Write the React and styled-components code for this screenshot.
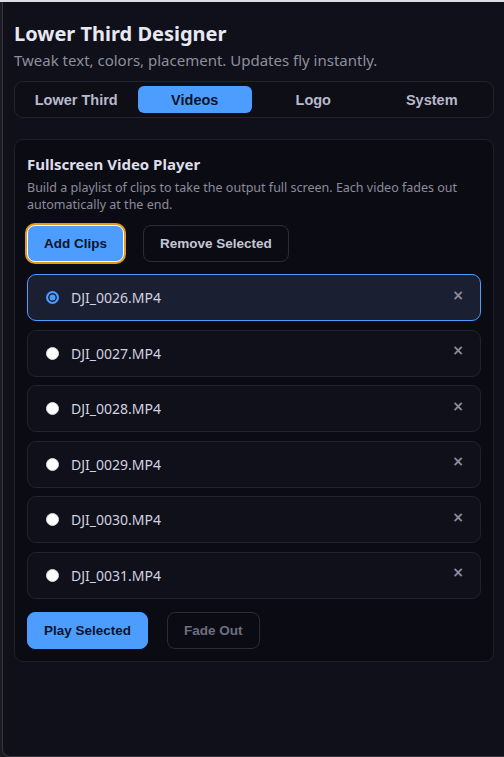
import React, { useState } from 'react';
import styled, { createGlobalStyle } from 'styled-components';

const GlobalStyle = createGlobalStyle`
  html, body {
    margin: 0;
    padding: 0;
    background: #1b1c22;
  }
  body {
    font-family: "Noto Sans", "Open Sans", sans-serif;
  }
`;

const Frame = styled.div`
  width: 504px;
  height: 757px;
  box-sizing: border-box;
  border-top: 2px solid #dcdce2;
  padding-left: 2px;
  background: #1b1c22;
`;

const Panel = styled.div`
  height: 100%;
  box-sizing: border-box;
  background: #0f1019;
  border-left: 1px solid #34353d;
  border-bottom: 1px solid #34353d;
  border-bottom-left-radius: 8px;
  padding: 18px 10px 0 11px;
`;

const Title = styled.h1`
  margin: 0;
  font-size: 20px;
  font-weight: 700;
  color: #e8e8f2;
  line-height: 28px;
`;

const Subtitle = styled.p`
  margin: 2px 0 11px;
  font-size: 15px;
  color: #8e8e9e;
  line-height: 20px;
`;

const Tabs = styled.div`
  display: grid;
  grid-template-columns: repeat(4, 1fr);
  gap: 4px;
  padding: 4px;
  border: 1px solid #22232e;
  border-radius: 9px;
  background: #0d0e16;
`;

const Tab = styled.button`
  height: 27px;
  border: none;
  border-radius: 6px;
  font-family: "Liberation Sans", Arial, sans-serif;
  font-weight: 700;
  font-size: 14.5px;
  background: ${p => (p.$active ? '#4c9dff' : 'transparent')};
  color: ${p => (p.$active ? '#0c1426' : '#b9b9cc')};
  cursor: pointer;
`;

const Card = styled.section`
  margin-top: 21px;
  border: 1px solid #1f202b;
  border-radius: 9px;
  background: #0b0c13;
  padding: 12px 12px 12px;
`;

const CardTitle = styled.h2`
  margin: 0;
  font-size: 15px;
  font-weight: 700;
  color: #dedeea;
  line-height: 24px;
`;

const CardText = styled.p`
  margin: 3px 0 12px;
  font-size: 12.5px;
  line-height: 17px;
  color: #8b8b9c;
`;

const Row = styled.div`
  display: flex;
  gap: 19px;
  align-items: center;
`;

const Button = styled.button`
  height: 37px;
  box-sizing: border-box;
  padding: 0 16px;
  border-radius: 8px;
  font-family: "Liberation Sans", Arial, sans-serif;
  font-weight: 700;
  font-size: 13.5px;
  cursor: pointer;
  border: 1px solid ${p => (p.$primary ? '#4c9dff' : '#2b2c39')};
  background: ${p => (p.$primary ? '#4c9dff' : 'transparent')};
  color: ${p => (p.$primary ? '#0c1426' : p.$dim ? '#6e6e80' : '#c6c6d6')};
  ${p =>
    p.$focus &&
    `
    border: 1px solid #ffffff;
    box-shadow: 0 0 0 2px #e39a1a;
  `}
`;

const List = styled.div`
  display: flex;
  flex-direction: column;
  gap: 8.6px;
  margin: 12px 0 13px;
`;

const Item = styled.div`
  display: flex;
  align-items: center;
  height: 47px;
  box-sizing: border-box;
  padding: 0 16px 0 18px;
  border-radius: 9px;
  border: 1px solid ${p => (p.$selected ? '#4c9dff' : '#22232f')};
  background: ${p => (p.$selected ? '#1a1f31' : '#0f1019')};
`;

const Radio = styled.span`
  width: 13px;
  height: 13px;
  box-sizing: border-box;
  border-radius: 50%;
  flex: none;
  background: ${p => (p.$checked ? '#4c9dff' : '#ffffff')};
  border: ${p => (p.$checked ? '2px solid #4c9dff' : '1px solid #d8d8d8')};
  box-shadow: ${p => (p.$checked ? 'inset 0 0 0 1.5px #1a1f31' : 'none')};
`;

const Name = styled.span`
  flex: 1;
  margin-left: 12px;
  font-size: 14px;
  color: #d2d2e0;
`;

const Close = styled.button`
  border: none;
  background: none;
  padding: 0;
  color: #8c8c9c;
  font-family: "DejaVu Sans", sans-serif;
  font-size: 14px;
  font-weight: 700;
  line-height: 1;
  margin-top: -6px;
  cursor: pointer;
`;

const clips = ['DJI_0026.MP4', 'DJI_0027.MP4', 'DJI_0028.MP4', 'DJI_0029.MP4', 'DJI_0030.MP4', 'DJI_0031.MP4'];
const tabs = ['Lower Third', 'Videos', 'Logo', 'System'];

export default function App() {
  const [selected, setSelected] = useState(0);
  return (
    <>
      <GlobalStyle />
      <Frame>
        <Panel>
          <Title>Lower Third Designer</Title>
          <Subtitle>Tweak text, colors, placement. Updates fly instantly.</Subtitle>
          <Tabs>
            {tabs.map(t => (
              <Tab key={t} $active={t === 'Videos'}>{t}</Tab>
            ))}
          </Tabs>
          <Card>
            <CardTitle>Fullscreen Video Player</CardTitle>
            <CardText>
              Build a playlist of clips to take the output full screen. Each video fades out
              automatically at the end.
            </CardText>
            <Row>
              <Button $primary $focus>Add Clips</Button>
              <Button>Remove Selected</Button>
            </Row>
            <List>
              {clips.map((c, i) => (
                <Item key={c} $selected={i === selected} onClick={() => setSelected(i)}>
                  <Radio $checked={i === selected} />
                  <Name>{c}</Name>
                  <Close>×</Close>
                </Item>
              ))}
            </List>
            <Row>
              <Button $primary>Play Selected</Button>
              <Button $dim>Fade Out</Button>
            </Row>
          </Card>
        </Panel>
      </Frame>
    </>
  );
}
